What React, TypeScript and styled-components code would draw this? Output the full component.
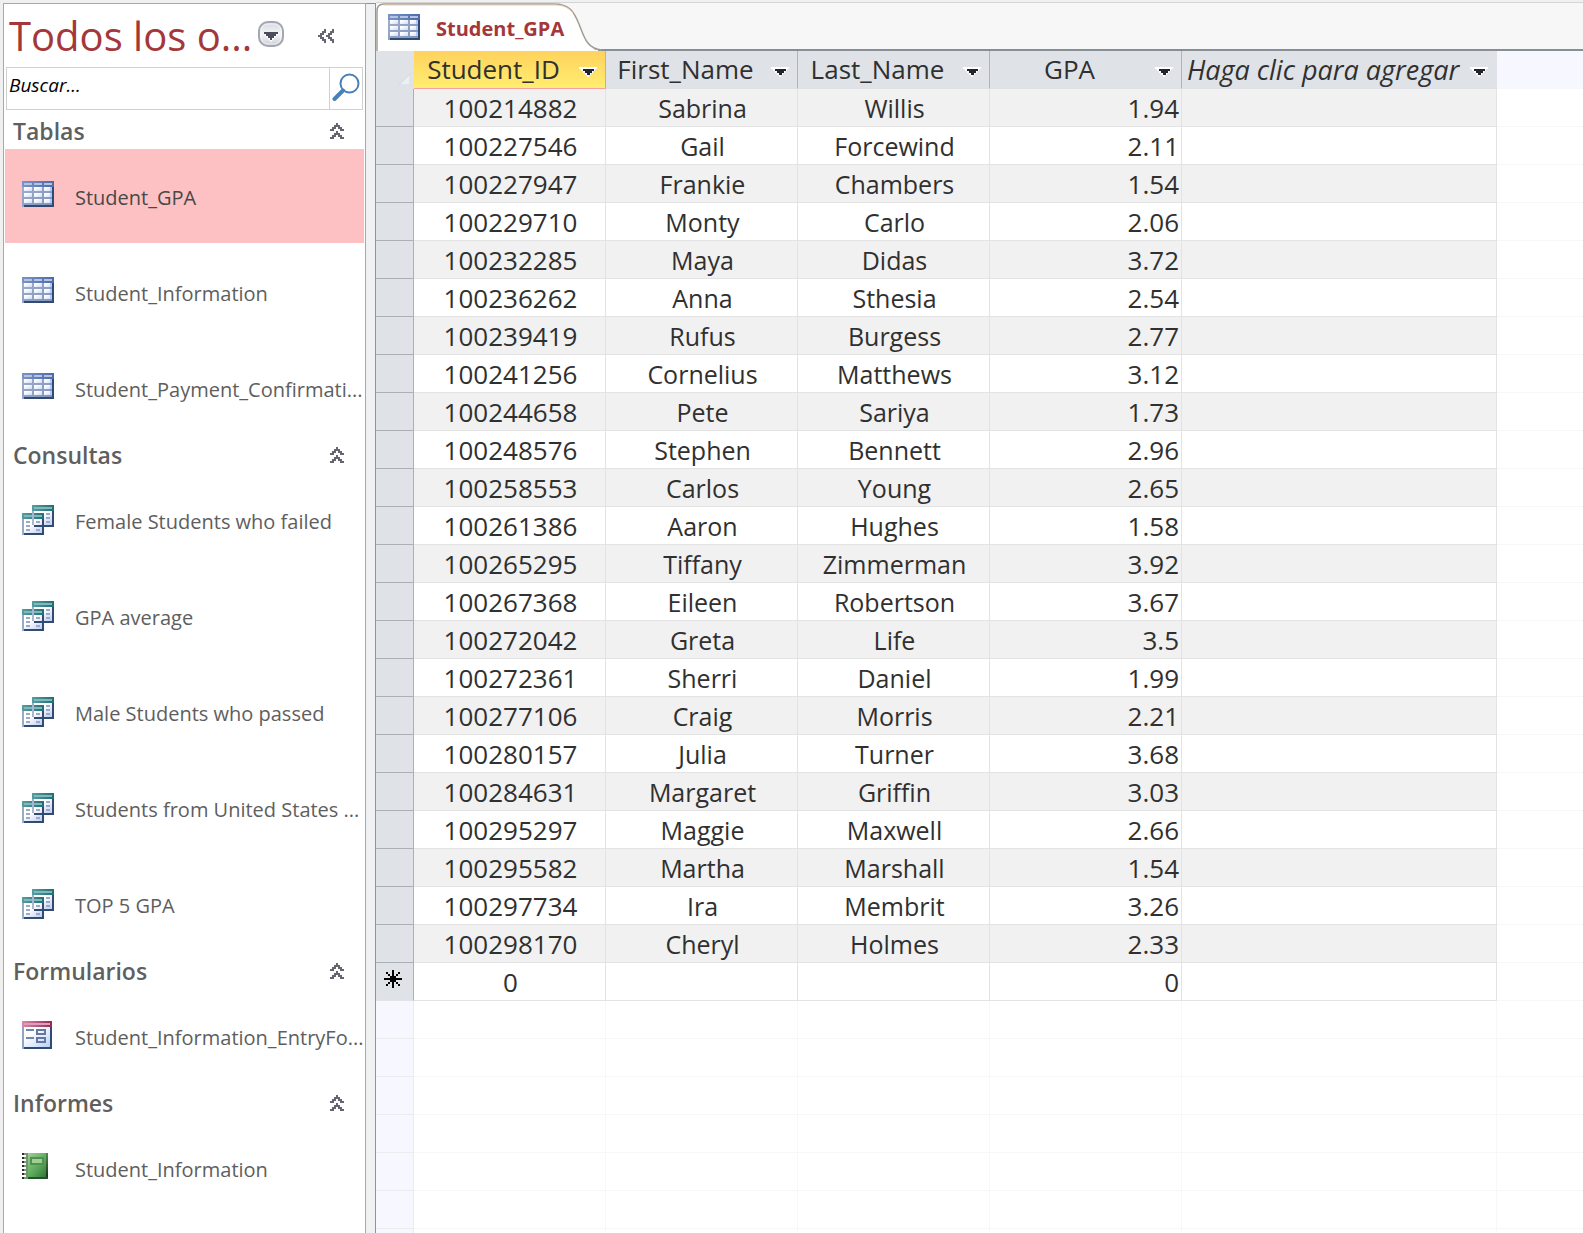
import React, { useState } from 'react';
import styled, { createGlobalStyle, css } from 'styled-components';

const GlobalStyle = createGlobalStyle`
  * { box-sizing: border-box; }
  body {
    margin: 0;
    background: #f0f0f0;
    font-family: "Open Sans", "Noto Sans", sans-serif;
  }
  button, input { font: inherit; color: inherit; }
  button { padding: 0; border: 0; background: none; cursor: pointer; }
`;

/* ---------- frame ---------- */

const Window = styled.div`
  display: flex;
  height: 100vh;
  padding-top: 2px;
  overflow: hidden;
`;

const NavPane = styled.nav`
  flex: none;
  width: 363px;
  margin-left: 3px;
  margin-top: 1px;
  border: 1px solid #a6a9ae;
  border-bottom: 0;
  background: #fff;
  overflow: hidden;
`;

const Splitter = styled.div`
  flex: none;
  width: 10px;
  margin-top: 1px;
  border-top: 1px solid #8e9299;
  border-right: 1px solid #8e9299;
  background: #eff1f3;
`;

const Workspace = styled.main`
  flex: 1;
  min-width: 0;
  display: flex;
  flex-direction: column;
  border-top: 1px solid #d4d4d4;
  background: #f7f7f7;
`;

/* ---------- navigation pane ---------- */

const NavHeader = styled.header`
  display: flex;
  align-items: center;
  height: 63px;
  padding: 0 31px 0 5px;
`;

const NavTitle = styled.h1`
  margin: 0;
  font-size: 40px;
  font-weight: 400;
  line-height: 56px;
  color: #a4373a;
  white-space: nowrap;
`;

const MenuButton = styled.button`
  margin-left: 5px;
  height: 32px;
  padding-bottom: 4px;
  line-height: 0;
`;

const ShutterButton = styled.button`
  margin-left: auto;
  height: 14px;
  line-height: 0;
`;

const SearchBox = styled.form`
  display: flex;
  height: 43px;
  margin: 0 2px 2px;
  border: 1px solid #d0d0d0;
`;

const SearchInput = styled.input`
  flex: 1;
  min-width: 0;
  padding: 0 0 8px 2px;
  border: 0;
  outline: 0;
  background: #fff;
  font-size: 19px;
  font-style: italic;
  &::placeholder { color: #000; opacity: 1; }
`;

const SearchButton = styled.button`
  display: flex;
  justify-content: center;
  width: 33px;
  padding-top: 5px;
  border-left: 1px solid #d0d0d0;
`;

const GroupHeader = styled.h2`
  display: flex;
  align-items: center;
  justify-content: space-between;
  height: 36px;
  margin: 0;
  padding: 2px 21px 0 9px;
  font-size: 23px;
  font-weight: 600;
  line-height: 34px;
  color: #5f5f5f;
`;

const CollapseButton = styled.button`
  height: 16px;
  line-height: 0;
`;

const GroupList = styled.ul`
  margin: 0;
  padding: 0;
  list-style: none;
`;

const NavItem = styled.li`
  padding: 1px;
`;

const NavLink = styled.a<{ $selected?: boolean }>`
  display: flex;
  gap: 21px;
  height: 94px;
  padding: 32px 0 0 17px;
  font-size: 20px;
  line-height: 34px;
  color: #5e5e5e;
  white-space: nowrap;
  text-decoration: none;
  ${(p) => p.$selected && css`
    background: #fdc1c3;
    color: #484848;
  `}
`;

const IconSlot = styled.span`
  flex: none;
  width: 32px;
  line-height: 0;
`;

/* ---------- document tab ---------- */

const TabStrip = styled.div`
  flex: none;
  display: flex;
  height: 48px;
  border-bottom: 2px solid #868e97;
`;

const Tab = styled.button`
  position: relative;
  display: flex;
  align-items: center;
  gap: 16px;
  width: 226px;
  height: 48px;
  padding: 0 0 0 12px;
  font-size: 20px;
  font-weight: 700;
  color: #a4373a;
`;

const TabShape = styled.svg`
  position: absolute;
  inset: 0;
`;

const TabContent = styled.span`
  position: relative;
  display: flex;
  line-height: 28px;
`;

const TabLabel = styled(TabContent)`
  padding-top: 3px;
`;

/* ---------- datasheet ---------- */

const Sheet = styled.div`
  flex: 1;
  min-height: 0;
  overflow: hidden;
  background: #fff;
`;

const Grid = styled.table`
  width: 100%;
  table-layout: fixed;
  border-collapse: separate;
  border-spacing: 0;
  font-size: 25px;
  line-height: 35px;
  color: #303030;
`;

const Col = styled.col<{ $width?: number }>`
  width: ${(p) => (p.$width ? `${p.$width}px` : 'auto')};
`;

const Row = styled.tr<{ $shaded?: boolean }>`
  height: 38px;
  --cell: ${(p) => (p.$shaded ? '#f1f1f1' : '#fff')};
`;

const ColumnHead = styled.th<{ $active?: boolean; $add?: boolean }>`
  height: 38px;
  padding: 0 8px 0 3px;
  border-right: 1px solid ${(p) => (p.$add ? '#dfe3e7' : '#b1b5ba')};
  border-bottom: 1px solid ${(p) => (p.$active ? '#f5a3a0' : '#dfe1e5')};
  background: ${(p) => (p.$active ? 'linear-gradient(#ffd25c, #ffee70)' : '#dfe2e7')};
  font-weight: 400;
  font-style: ${(p) => (p.$add ? 'italic' : 'normal')};
  font-size: ${(p) => (p.$add ? 27 : 26)}px;
  white-space: nowrap;
`;

const HeadContent = styled.div`
  display: flex;
  align-items: center;
  height: 37px;
`;

const HeadLabel = styled.span`
  flex: 1;
  padding-right: 9px;
  text-align: center;
`;

const FilterButton = styled.button`
  flex: none;
  width: 18px;
  padding-top: 4px;
  line-height: 0;
`;

const Corner = styled.td`
  padding: 0 3px 4px 0;
  border-right: 1px solid #dfe2e7;
  background: #dfe2e7;
  text-align: right;
  vertical-align: bottom;
  line-height: 0;
`;

const Selector = styled.td<{ $last?: boolean }>`
  height: 38px;
  padding: 0 4px 5px 0;
  border-right: 1px solid #abb0b7;
  border-bottom: 1px solid ${(p) => (p.$last ? '#e3e3e5' : '#abb0b7')};
  background: #dfe2e7;
  text-align: center;
  line-height: 0;
`;

const Cell = styled.td<{ $align?: 'center' | 'right'; $numeric?: boolean }>`
  height: 38px;
  padding: 2px 2px 0 4px;
  border-right: 1px solid #e3e3e3;
  border-bottom: 1px solid #e3e3e3;
  background: var(--cell);
  text-align: ${(p) => p.$align ?? 'center'};
  font-size: ${(p) => (p.$numeric ? 26 : 25)}px;
`;

const BlankCell = styled.td<{ $tone?: 'margin' | 'head' | 'edge' }>`
  height: 38px;
  padding: 0;
  border-bottom: 1px solid #f7f7f8;
  border-right: ${(p) => (p.$tone === 'edge' || p.$tone === 'head' ? '0' : '1px solid #f7f7f8')};
  background: ${(p) => (p.$tone === 'margin' || p.$tone === 'head' ? '#f6f7ff' : '#fff')};
  ${(p) => p.$tone === 'margin' && css`border-color: #ececef;`}
`;

/* ---------- icons ---------- */

const TableIcon = () => (
  <svg width="32" height="26" viewBox="0 0 16 13" shapeRendering="crispEdges" aria-hidden="true">
    <defs>
      <linearGradient id="tblHead" x1="0" x2="1"><stop offset="0" stopColor="#7c93c6" /><stop offset="1" stopColor="#4c6aa8" /></linearGradient>
      <linearGradient id="tblFrame" x1="0" y1="0" x2="1" y2="1"><stop offset="0" stopColor="#a3b1cd" /><stop offset="1" stopColor="#7f92bb" /></linearGradient>
      <linearGradient id="tblCell" x1="0" y1="0" x2="1" y2="1"><stop offset="0.2" stopColor="#ffffff" /><stop offset="1" stopColor="#cfdcfa" /></linearGradient>
    </defs>
    <rect width="16" height="13" fill="url(#tblFrame)" />
    <rect width="16" height="3" fill="url(#tblHead)" />
    <path d="M15 3h1v10H1v-1h14z" fill="#304a70" />
    {[1, 6, 11].map((x) => (
      <g key={x}>
        <rect x={x} y="1" width="4" height="1" fill="#b4c3e2" />
        {[3, 6, 9].map((y) => (
          <g key={y}>
            <rect x={x} y={y} width="4" height="2" fill="url(#tblCell)" />
            {x === 11 && <rect x={14} y={y} width="1" height="2" fill="#b2c8fa" />}
          </g>
        ))}
      </g>
    ))}
  </svg>
);

const QueryWindow = ({ x, y }: { x: number; y: number }) => (
  <g transform={`translate(${x} ${y})`}>
    <rect width="11" height="11" fill="#9aabc8" />
    <rect x="1" y="3" width="9" height="7" fill="url(#qryBody)" />
    <rect width="11" height="3" fill="url(#qryHead)" />
    <rect x="1" y="1" width="9" height="1" fill="#7fb9bd" />
    <path d="M10 3h1v8H1v-1h9z" fill="#314c72" />
    <path d="M2 4h2v1H2zM7 4h2v1H7zM2 6h2v1H2zM7 6h2v1H7zM2 8h2v1H2zM7 8h2v1H7z" fill="#9caac6" />
  </g>
);

const QueryIcon = () => (
  <svg width="32" height="30" viewBox="0 0 16 15" shapeRendering="crispEdges" aria-hidden="true">
    <defs>
      <linearGradient id="qryHead" x1="0" x2="1"><stop offset="0" stopColor="#5a9ca2" /><stop offset="1" stopColor="#1e6f77" /></linearGradient>
      <linearGradient id="qryBody" x1="0" y1="0" x2="1" y2="1"><stop offset="0.4" stopColor="#ffffff" /><stop offset="1" stopColor="#bccbf0" /></linearGradient>
    </defs>
    <QueryWindow x={5} y={0} />
    <QueryWindow x={0} y={4} />
    <path d="M5 4h1v6H5z" fill="#a9b8cf" />
    <path d="M6 10h5v1H6z" fill="#314c72" />
  </svg>
);

const FormIcon = () => (
  <svg width="30" height="28" viewBox="0 0 15 14" shapeRendering="crispEdges" aria-hidden="true">
    <defs>
      <linearGradient id="frmHead" x1="0" x2="1"><stop offset="0" stopColor="#d98aa6" /><stop offset="1" stopColor="#96265a" /></linearGradient>
      <linearGradient id="frmBody" x1="0" y1="0" x2="1" y2="1"><stop offset="0.3" stopColor="#ffffff" /><stop offset="1" stopColor="#b9cdfa" /></linearGradient>
    </defs>
    <rect width="15" height="14" fill="#93a5c6" />
    <rect x="1" y="3" width="13" height="10" fill="url(#frmBody)" />
    <rect width="15" height="3" fill="url(#frmHead)" />
    <rect x="1" y="1" width="13" height="1" fill="#dd9fb7" />
    <path d="M14 3h1v11H1v-1h13z" fill="#314a70" />
    <path d="M2 4h4v1H2zM2 8h4v1H2z" fill="#6f86b0" />
    <path d="M7 4h5v3H7zM8 5v1h3V5zM7 8h5v3H7zM8 9v1h3V9z" fill="#63779f" fillRule="evenodd" />
  </svg>
);

const ReportIcon = () => (
  <svg width="26" height="26" viewBox="0 0 13 13" shapeRendering="crispEdges" aria-hidden="true">
    <defs>
      <linearGradient id="rptBody" x1="0" y1="0" x2="1" y2="1"><stop offset="0" stopColor="#a5d29a" /><stop offset="0.55" stopColor="#5ba85b" /><stop offset="1" stopColor="#2c6a33" /></linearGradient>
      <linearGradient id="rptEdge" x1="0" y1="0" x2="0" y2="1"><stop offset="0" stopColor="#4c8c4c" /><stop offset="1" stopColor="#152c18" /></linearGradient>
    </defs>
    <rect x="2" width="11" height="13" fill="url(#rptBody)" />
    <rect x="2" width="1" height="13" fill="#6c9a6c" />
    <rect x="12" width="1" height="13" fill="url(#rptEdge)" />
    <rect x="3" y="12" width="10" height="1" fill="#24522a" />
    <rect x="4" y="2" width="7" height="4" fill="#4f9152" />
    <rect x="5" y="3" width="5" height="2" fill="#9fd08f" />
    {[0, 2, 4, 6, 8, 10, 12].map((y) => (
      <g key={y}>
        <rect x="0" y={y} width="1" height="1" fill="#2b2b2b" />
        <rect x="1" y={y} width="1" height="1" fill="#8a8f8a" />
      </g>
    ))}
  </svg>
);

const DropIcon = () => (
  <svg width="28" height="28" viewBox="0 0 28 28" aria-hidden="true">
    <defs>
      <linearGradient id="dropFill" x1="0" y1="0" x2="0" y2="1"><stop offset="0" stopColor="#d5d8dd" /><stop offset="0.5" stopColor="#f4f5f6" /><stop offset="1" stopColor="#c9cdd4" /></linearGradient>
    </defs>
    <rect x="2" y="2" width="24" height="24" rx="9" fill="url(#dropFill)" stroke="#a2a7b1" strokeWidth="2" />
    <rect x="4" y="4" width="20" height="20" rx="7" fill="none" stroke="#ffffff" strokeOpacity="0.6" />
    <path d="M7 14h14l-7 8z" fill="#fff" />
    <path d="M7 12h14v2h-2v2h-2v2h-2v2h-2v-2h-2v-2H9v-2H7z" fill="#4b4b5b" />
  </svg>
);

const ShutterIcon = () => (
  <svg width="16" height="14" viewBox="0 0 8 7" shapeRendering="crispEdges" aria-hidden="true">
    <path d="M3 0h1v1H3zM2 1h2v1H2zM1 2h2v1H1zM0 3h2v1H0zM1 4h2v1H1zM2 5h2v1H2zM3 6h1v1H3zM7 0h1v1H7zM6 1h2v1H6zM5 2h2v1H5zM4 3h2v1H4zM5 4h2v1H5zM6 5h2v1H6zM7 6h1v1H7z" fill="#666672" />
  </svg>
);

const CollapseIcon = () => (
  <svg width="14" height="16" viewBox="0 0 7 8" shapeRendering="crispEdges" aria-hidden="true">
    <path d="M3 0h1v1H3zM2 1h3v1H2zM1 2h2v1H1zM4 2h2v1H4zM0 3h2v1H0zM5 3h2v1H5zM3 4h1v1H3zM2 5h3v1H2zM1 6h2v1H1zM4 6h2v1H4zM0 7h2v1H0zM5 7h2v1H5z" fill="#666672" />
  </svg>
);

const SearchIcon = () => (
  <svg width="28" height="28" viewBox="0 0 28 28" fill="none" stroke="#4a80b8" aria-hidden="true">
    <circle cx="17.500" cy="10.500" r="9" strokeWidth="2" />
    <path d="M11 17.500L2.500 26" strokeWidth="4" strokeLinecap="round" />
  </svg>
);

const ArrowIcon = () => (
  <svg width="18" height="10" viewBox="0 0 18 10" shapeRendering="crispEdges" aria-hidden="true">
    <path d="M0 0h18v2h-2v2h-2v2h-2v2h-2v2H8V8H6V6H4V4H2V2H0z" fill="#fff" />
    <path d="M4 2h11v2h-2v2h-2v2H8V6H6V4H4z" fill="#20242c" />
  </svg>
);

const CornerIcon = () => (
  <svg width="11" height="11" viewBox="0 0 11 11" aria-hidden="true">
    <path d="M0 11L11 0v11z" fill="#eceff4" stroke="#c4cddd" strokeWidth="0.6" />
  </svg>
);

const NewRowIcon = () => (
  <svg width="18" height="18" viewBox="0 0 9 9" shapeRendering="crispEdges" aria-hidden="true">
    <path d="M4 0h1v9H4zM0 4h9v1H0zM3 3h3v3H3zM1 1h1v1H1zM2 2h1v1H2zM7 1h1v1H7zM6 2h1v1H6zM1 7h1v1H1zM2 6h1v1H2zM7 7h1v1H7zM6 6h1v1H6z" fill="#000" />
  </svg>
);

/* ---------- data ---------- */

const ICONS = { table: TableIcon, query: QueryIcon, form: FormIcon, report: ReportIcon };

const GROUPS: { title: string; icon: keyof typeof ICONS; items: string[] }[] = [
  { title: 'Tablas', icon: 'table', items: ['Student_GPA', 'Student_Information', 'Student_Payment_Confirmati...'] },
  {
    title: 'Consultas',
    icon: 'query',
    items: ['Female Students who failed', 'GPA average', 'Male Students who passed', 'Students from United States ...', 'TOP 5 GPA'],
  },
  { title: 'Formularios', icon: 'form', items: ['Student_Information_EntryFo...'] },
  { title: 'Informes', icon: 'report', items: ['Student_Information'] },
];

const COLUMNS = ['Student_ID', 'First_Name', 'Last_Name', 'GPA'];

const STUDENTS: [string, string, string, string][] = [
  ['100214882', 'Sabrina', 'Willis', '1.94'],
  ['100227546', 'Gail', 'Forcewind', '2.11'],
  ['100227947', 'Frankie', 'Chambers', '1.54'],
  ['100229710', 'Monty', 'Carlo', '2.06'],
  ['100232285', 'Maya', 'Didas', '3.72'],
  ['100236262', 'Anna', 'Sthesia', '2.54'],
  ['100239419', 'Rufus', 'Burgess', '2.77'],
  ['100241256', 'Cornelius', 'Matthews', '3.12'],
  ['100244658', 'Pete', 'Sariya', '1.73'],
  ['100248576', 'Stephen', 'Bennett', '2.96'],
  ['100258553', 'Carlos', 'Young', '2.65'],
  ['100261386', 'Aaron', 'Hughes', '1.58'],
  ['100265295', 'Tiffany', 'Zimmerman', '3.92'],
  ['100267368', 'Eileen', 'Robertson', '3.67'],
  ['100272042', 'Greta', 'Life', '3.5'],
  ['100272361', 'Sherri', 'Daniel', '1.99'],
  ['100277106', 'Craig', 'Morris', '2.21'],
  ['100280157', 'Julia', 'Turner', '3.68'],
  ['100284631', 'Margaret', 'Griffin', '3.03'],
  ['100295297', 'Maggie', 'Maxwell', '2.66'],
  ['100295582', 'Martha', 'Marshall', '1.54'],
  ['100297734', 'Ira', 'Membrit', '3.26'],
  ['100298170', 'Cheryl', 'Holmes', '2.33'],
];

const BLANK_ROWS = 7;

/* ---------- parts ---------- */

function NavGroup({ title, icon, items }: (typeof GROUPS)[number]) {
  const [open, setOpen] = useState(true);
  const Icon = ICONS[icon];
  return (
    <section>
      <GroupHeader>
        {title}
        <CollapseButton type="button" aria-label={title} aria-expanded={open} onClick={() => setOpen(!open)}>
          <CollapseIcon />
        </CollapseButton>
      </GroupHeader>
      {open && (
        <GroupList>
          {items.map((name) => (
            <NavItem key={name}>
              <NavLink href="#" $selected={name === 'Student_GPA'}>
                <IconSlot><Icon /></IconSlot>
                {name}
              </NavLink>
            </NavItem>
          ))}
        </GroupList>
      )}
    </section>
  );
}

function RecordRow({ values, shaded, isNew }: { values: string[]; shaded?: boolean; isNew?: boolean }) {
  const [id, first, last, gpa] = values;
  return (
    <Row $shaded={shaded}>
      <Selector $last={isNew}>{isNew && <NewRowIcon />}</Selector>
      <Cell $numeric>{id}</Cell>
      <Cell>{first}</Cell>
      <Cell>{last}</Cell>
      <Cell $numeric $align="right">{gpa}</Cell>
      <Cell />
      <BlankCell $tone="edge" />
    </Row>
  );
}

export default function App() {
  return (
    <>
      <GlobalStyle />
      <Window>
        <NavPane>
          <NavHeader>
            <NavTitle>Todos los o...</NavTitle>
            <MenuButton type="button" aria-label="Categorías"><DropIcon /></MenuButton>
            <ShutterButton type="button" aria-label="Contraer panel"><ShutterIcon /></ShutterButton>
          </NavHeader>
          <SearchBox role="search" onSubmit={(e) => e.preventDefault()}>
            <SearchInput type="text" placeholder="Buscar..." aria-label="Buscar" />
            <SearchButton type="submit" aria-label="Buscar"><SearchIcon /></SearchButton>
          </SearchBox>
          {GROUPS.map((group) => <NavGroup key={group.title} {...group} />)}
        </NavPane>
        <Splitter />
        <Workspace>
          <TabStrip role="tablist">
            <Tab type="button" role="tab" aria-selected="true">
              <TabShape width="226" height="48" viewBox="0 0 226 48" aria-hidden="true">
                <path d="M0 48V8Q0 1 8 1H178C194 1 198 9 203 21C208 34 211 46 222 47V48Z" fill="#fff" />
                <path d="M1 48V8Q1 1 8 1H178C194 1 198 9 203 21C208 34 211 46 226 47" fill="none" stroke="#a19c95" strokeWidth="1.500" />
                <path d="M8 2H178C188 2 193 5 197 10" fill="none" stroke="#e6cbb0" />
              </TabShape>
              <TabContent><TableIcon /></TabContent>
              <TabLabel>Student_GPA</TabLabel>
            </Tab>
          </TabStrip>
          <Sheet>
            <Grid>
              <colgroup>
                <Col $width={38} />
                {COLUMNS.map((name) => <Col key={name} $width={192} />)}
                <Col $width={315} />
                <Col />
              </colgroup>
              <thead>
                <Row>
                  <Corner><CornerIcon /></Corner>
                  {COLUMNS.map((name, i) => (
                    <ColumnHead key={name} $active={i === 0} scope="col">
                      <HeadContent>
                        <HeadLabel>{name}</HeadLabel>
                        <FilterButton type="button" aria-label={name}><ArrowIcon /></FilterButton>
                      </HeadContent>
                    </ColumnHead>
                  ))}
                  <ColumnHead $add scope="col">
                    <HeadContent>
                      <HeadLabel>Haga clic para agregar</HeadLabel>
                      <FilterButton type="button" aria-label="Agregar"><ArrowIcon /></FilterButton>
                    </HeadContent>
                  </ColumnHead>
                  <BlankCell $tone="head" />
                </Row>
              </thead>
              <tbody>
                {STUDENTS.map((student, i) => (
                  <RecordRow key={student[0]} values={student} shaded={i % 2 === 0} />
                ))}
                <RecordRow values={['0', '', '', '0']} isNew />
                {Array.from({ length: BLANK_ROWS }, (_, i) => (
                  <Row key={i}>
                    <BlankCell $tone="margin" />
                    <BlankCell />
                    <BlankCell />
                    <BlankCell />
                    <BlankCell />
                    <BlankCell />
                    <BlankCell $tone="edge" />
                  </Row>
                ))}
              </tbody>
            </Grid>
          </Sheet>
        </Workspace>
      </Window>
    </>
  );
}
